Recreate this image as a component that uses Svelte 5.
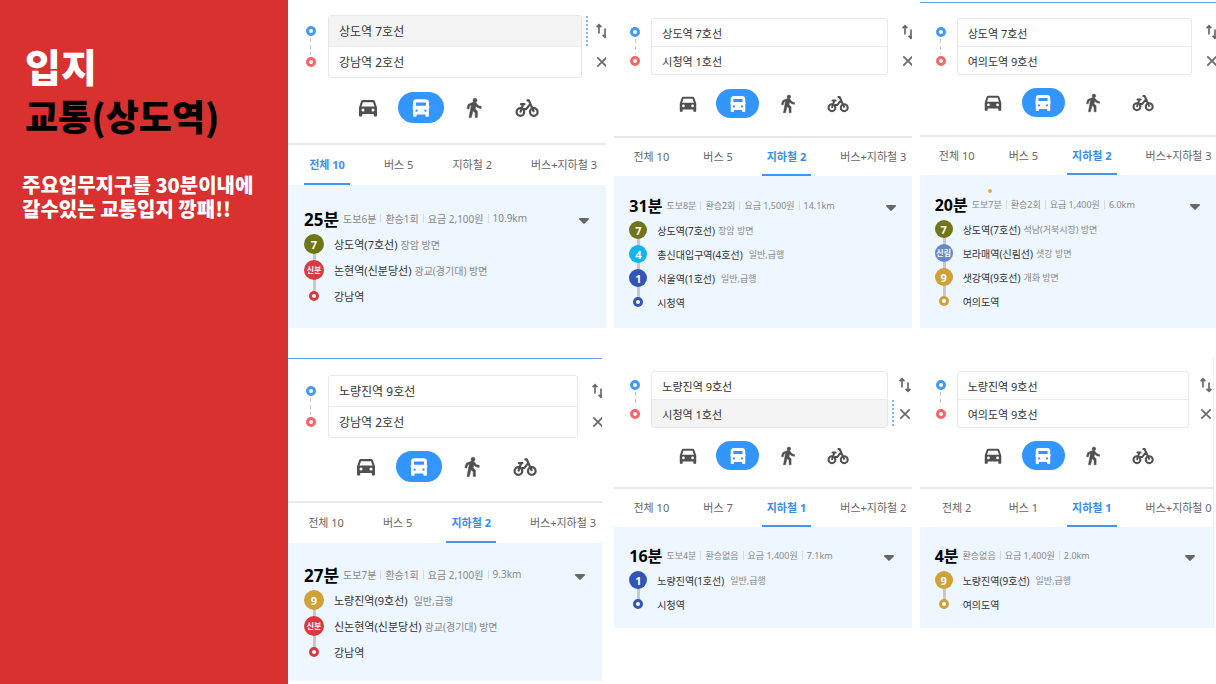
<script>
  const RED = '#d83a3f';
  const OLIVE = '#6f7617';
  const SKY = '#10b4ee';
  const NAVY = '#3355b8';
  const GOLD = '#cfa136';
  const SILLIM = '#6789ca';

  const modes = [
    { id: 'car', label: '자동차' },
    { id: 'bus', label: '대중교통' },
    { id: 'walk', label: '도보' },
    { id: 'bike', label: '자전거' }
  ];

  let routes = $state([
    {
      look: 'large',
      from: '상도역 7호선', to: '강남역 2호선', focused: 'from',
      tabs: ['전체 10', '버스 5', '지하철 2', '버스+지하철 3'], tab: 0, mode: 'bus',
      time: '25분', facts: ['도보6분', '환승1회', '요금 2,100원', '10.9km'],
      stops: [
        { name: '상도역(7호선)', note: '장암 방면', badge: '7', color: OLIVE },
        { name: '논현역(신분당선)', note: '광교(경기대) 방면', badge: '신분', color: RED },
        { name: '강남역', color: RED }
      ]
    },
    {
      look: '',
      from: '상도역 7호선', to: '시청역 1호선', focused: '',
      tabs: ['전체 10', '버스 5', '지하철 2', '버스+지하철 3'], tab: 2, mode: 'bus',
      time: '31분', facts: ['도보8분', '환승2회', '요금 1,500원', '14.1km'],
      stops: [
        { name: '상도역(7호선)', note: '장암 방면', badge: '7', color: OLIVE },
        { name: '총신대입구역(4호선)', note: '일반,급행', badge: '4', color: SKY, wide: true },
        { name: '서울역(1호선)', note: '일반,급행', badge: '1', color: NAVY, wide: true },
        { name: '시청역', color: NAVY }
      ]
    },
    {
      look: 'ruled marked',
      from: '상도역 7호선', to: '여의도역 9호선', focused: '',
      tabs: ['전체 10', '버스 5', '지하철 2', '버스+지하철 3'], tab: 2, mode: 'bus',
      time: '20분', facts: ['도보7분', '환승2회', '요금 1,400원', '6.0km'],
      stops: [
        { name: '상도역(7호선)', note: '석남(거북시장) 방면', badge: '7', color: OLIVE },
        { name: '보라매역(신림선)', note: '샛강 방면', badge: '신림', color: SILLIM },
        { name: '샛강역(9호선)', note: '개화 방면', badge: '9', color: GOLD },
        { name: '여의도역', color: GOLD }
      ]
    },
    {
      look: 'large lower',
      from: '노량진역 9호선', to: '강남역 2호선', focused: '',
      tabs: ['전체 10', '버스 5', '지하철 2', '버스+지하철 3'], tab: 2, mode: 'bus',
      time: '27분', facts: ['도보7분', '환승1회', '요금 2,100원', '9.3km'],
      stops: [
        { name: '노량진역(9호선)', note: '일반,급행', badge: '9', color: GOLD, wide: true },
        { name: '신논현역(신분당선)', note: '광교(경기대) 방면', badge: '신분', color: RED },
        { name: '강남역', color: RED }
      ]
    },
    {
      look: 'lower',
      from: '노량진역 9호선', to: '시청역 1호선', focused: 'to',
      tabs: ['전체 10', '버스 7', '지하철 1', '버스+지하철 2'], tab: 2, mode: 'bus',
      time: '16분', facts: ['도보4분', '환승없음', '요금 1,400원', '7.1km'],
      stops: [
        { name: '노량진역(1호선)', note: '일반,급행', badge: '1', color: NAVY, wide: true },
        { name: '시청역', color: NAVY }
      ]
    },
    {
      look: 'lower edged',
      from: '노량진역 9호선', to: '여의도역 9호선', focused: '',
      tabs: ['전체 2', '버스 1', '지하철 1', '버스+지하철 0'], tab: 2, mode: 'bus',
      time: '4분', facts: ['환승없음', '요금 1,400원', '2.0km'],
      stops: [
        { name: '노량진역(9호선)', note: '일반,급행', badge: '9', color: GOLD, wide: true },
        { name: '여의도역', color: GOLD }
      ]
    }
  ]);

  function swap(route) {
    [route.from, route.to] = [route.to, route.from];
  }

  function clear(route) {
    route.from = '';
    route.to = '';
  }
</script>

{#snippet modeIcon(id)}
  <svg class="mode-icon" viewBox="0 0 24 24" aria-hidden="true">
    {#if id === 'car'}
      <path fill="currentColor" fill-rule="evenodd" d="M18.9 5.2C18.6 4.4 18 4 17.300 4H6.700C6 4 5.400 4.400 5.100 5.200L3 11.500V19.500c0 .6.4 1 1 1h1.200c.6 0 1-.4 1-1V18h11.600v1.500c0 .6.4 1 1 1H20c.6 0 1-.4 1-1v-8zM7 15.600a1.500 1.500 0 1 1 0-3 1.500 1.500 0 0 1 0 3zm10 0a1.500 1.500 0 1 1 0-3 1.500 1.500 0 0 1 0 3zM5.500 10.500 7 6.200h10l1.500 4.300z" />
    {:else if id === 'bus'}
      <path fill="currentColor" fill-rule="evenodd" d="M7.600 3.300h8.800c2.300 0 3.500 1.200 3.500 3.200v3.500h.4v2.400h-.4V19.700c0 .6-.4 1-1 1h-1.500c-.6 0-1-.4-1-1V18.600H7.600v1.100c0 .6-.4 1-1 1H5.100c-.6 0-1-.4-1-1V12.400h-.4V10h.4V6.500c0-2 1.200-3.200 3.500-3.200zM7 6.500v3.300h10V6.500zm.6 9.300a1.200 1.200 0 1 0 0-2.400 1.200 1.200 0 0 0 0 2.400zm8.800 0a1.200 1.200 0 1 0 0-2.400 1.200 1.200 0 0 0 0 2.400z" />
    {:else if id === 'walk'}
      <g fill="currentColor" stroke="currentColor" stroke-width=".5">
        <circle cx="13" cy="4.200" r="2" />
        <path d="M9.300 9.100 7 21.600h2.300l1.700-6.800 2.200 2v4.800h2.200v-6.500l-2.200-2.200.6-3c1.300 1.500 3.300 2.500 5.400 2.500v-2.100c-1.900 0-3.400-1-4.200-2.300l-.9-1.300c-.4-.5-.9-.8-1.600-.8-.3 0-.5 0-.8.1L6.200 8.300 4.800 12.500l1.900.7 1.100-3.500z" />
      </g>
    {:else}
      <g fill="none" stroke="currentColor" stroke-width="2.200" stroke-linecap="round" stroke-linejoin="round">
        <circle cx="5.400" cy="16" r="3.800" />
        <circle cx="18.800" cy="16" r="3.800" />
        <path d="M5.600 15.600 8 8.400M6 8.200h3.400M9.200 13.200h1.800L15 8.400M12.400 4.400h1.400l4.800 10.800" />
      </g>
    {/if}
  </svg>
{/snippet}

<div class="page">
  <aside class="intro">
    <h1>입지<span>교통(상도역)</span></h1>
    <p>주요업무지구를 30분이내에<br />갈수있는 교통입지 깡패!!</p>
  </aside>

  <main class="board">
    {#each routes as route, i}
      <section class="panel {route.look}">
        <form class="search" onsubmit={(event) => event.preventDefault()}>
          <div class="ends" aria-hidden="true">
            <span class="ring"></span>
            <span class="ring goal"></span>
          </div>
          <div class="fields">
            <div class="field" class:focused={route.focused === 'from'}>
              <input id="from-{i}" aria-label="출발지" bind:value={route.from} />
            </div>
            <div class="field" class:focused={route.focused === 'to'}>
              <input id="to-{i}" aria-label="도착지" bind:value={route.to} />
            </div>
          </div>
          <div class="tools">
            <button type="button" aria-label="출발지와 도착지 바꾸기" onclick={() => swap(route)}>
              <svg viewBox="0 0 16 16" aria-hidden="true">
                <path d="M5 10.500V1.800M2.600 4.200 5 1.800l2.400 2.400M11 5.500v8.700M8.600 11.800 11 14.200l2.400-2.400" />
              </svg>
            </button>
            <button type="button" aria-label="지우기" onclick={() => clear(route)}>
              <svg viewBox="0 0 16 16" aria-hidden="true">
                <path d="M3.300 3.300l9.400 9.400M12.700 3.300l-9.400 9.400" />
              </svg>
            </button>
          </div>
        </form>

        <div class="modes">
          {#each modes as mode}
            <button
              type="button"
              class:on={route.mode === mode.id}
              aria-label={mode.label}
              aria-pressed={route.mode === mode.id}
              onclick={() => (route.mode = mode.id)}
            >
              {@render modeIcon(mode.id)}
            </button>
          {/each}
        </div>

        <div class="tabs">
          {#each route.tabs as tab, n}
            <button
              type="button"
              class:active={route.tab === n}
              aria-pressed={route.tab === n}
              onclick={() => (route.tab = n)}>{tab}</button>
          {/each}
        </div>

        <div class="result">
          <div class="summary">
            <strong>{route.time}</strong>
            <ul class="facts">
              {#each route.facts as fact}
                <li>{fact}</li>
              {/each}
            </ul>
            <button type="button" class="caret" aria-label="펼치기">
              <svg viewBox="0 0 10 6" aria-hidden="true">
                <path d="M1 0h8c.8 0 1.200.8.7 1.400L5.700 5.600a1 1 0 0 1-1.400 0L.3 1.400C-.2.800.2 0 1 0z" />
              </svg>
            </button>
          </div>
          <ol class="stops">
            {#each route.stops as stop}
              <li>
                <span class="marker" style:--line={stop.color}>
                  {#if stop.badge}
                    <span class="badge" class:word={stop.badge.length > 1}>{stop.badge}</span>
                  {:else}
                    <span class="end"></span>
                  {/if}
                </span>
                <span class="name">{stop.name}</span>
                {#if stop.note}
                  <span class="note" class:wide={stop.wide}>{stop.note}</span>
                {/if}
              </li>
            {/each}
          </ol>
        </div>
      </section>
    {/each}
  </main>
</div>

<style>
  :global(body) {
    margin: 0;
    background: #fff;
  }

  .page {
    display: grid;
    grid-template-columns: 288px minmax(0, 1fr);
    min-height: 100vh;
    font-family: "Noto Sans", "Noto Sans CJK KR", sans-serif;
    color: #333;
  }

  .page *,
  .page *::before,
  .page *::after {
    box-sizing: border-box;
  }

  button,
  input {
    margin: 0;
    padding: 0;
    border: 0;
    background: none;
    color: inherit;
    font: inherit;
  }

  button {
    cursor: pointer;
  }

  svg {
    display: block;
  }

  ul,
  ol {
    margin: 0;
    padding: 0;
    list-style: none;
  }

  .intro {
    padding: 40px 22px;
    background: #d93030;
    color: #fff;
    font-family: "Noto Sans CJK KR", sans-serif;
    white-space: nowrap;
  }

  .intro h1 {
    margin: 0 0 33px;
    padding-left: 3px;
    font-size: 39px;
    font-weight: 900;
    line-height: 50px;
  }

  .intro h1 span {
    display: block;
    font-size: 36px;
    color: #000;
  }

  .intro p {
    margin: 0;
    font-size: 20px;
    font-weight: 900;
    line-height: 24px;
  }

  .board {
    display: grid;
    grid-template-columns: 318fr 297fr 296fr;
    gap: 30px 8px;
    align-content: start;
  }

  .panel {
    --edge: 37px;
    --field: 27px;
    --pill-w: 43px;
    --pill-h: 29px;
    --mode-left: 52px;
    --mode-top: 14px;
    --mode-bottom: 18px;
    --icon: 22px;
    --tab-left: 14px;
    --tab-h: 38px;
    --tab-gap: 24px;
    --text: 11px;
    --time: 16px;
    --meta: 9px;
    --stop: 10px;
    --row: 24px;
    --badge: 18px;
    --pad: 15px;
    --result-top: 16px;
    --result-bottom: 14px;
    --tools: 12px;
    --caret: 1px;
    position: relative;
    display: flex;
    flex-direction: column;
    min-width: 0;
    padding-top: 18px;
    overflow: hidden;
  }

  .lower {
    --mode-top: 13px;
    --mode-bottom: 17px;
    --result-top: 15px;
    --result-bottom: 12px;
    --tools: 9px;
    --caret: 3px;
    align-self: start;
    padding-top: 13px;
  }

  .large {
    --edge: 40px;
    --field: 30px;
    --pill-w: 46px;
    --pill-h: 31px;
    --mode-left: 57px;
    --mode-top: 14px;
    --mode-bottom: 20px;
    --icon: 24px;
    --tab-left: 16px;
    --tab-h: 40px;
    --tab-gap: 29px;
    --text: 12px;
    --time: 17px;
    --meta: 10px;
    --stop: 11px;
    --row: 26px;
    --badge: 20px;
    --pad: 16px;
    --result-top: 20px;
    --result-bottom: 18px;
    --tools: 12px;
    --caret: 1px;
    padding-top: 15px;
  }

  .large.lower {
    --mode-left: 55px;
    --mode-top: 13px;
    --mode-bottom: 19px;
    --tab-left: 15px;
    --result-top: 18px;
    --result-bottom: 16px;
    margin-right: 4px;
    padding-top: 16px;
    border-top: 1px solid #6a9df0;
  }

  .ruled {
    --mode-top: 13px;
    margin-top: 2px;
    padding-top: 15px;
    border-top: 1px solid #6a9df0;
  }

  .edged {
    margin-right: 2px;
    border-right: 1px solid #eee;
  }

  .marked::after {
    content: "";
    position: absolute;
    top: 186px;
    left: 68px;
    width: 4px;
    height: 4px;
    border-radius: 50%;
    background: #f9a825;
  }

  .search {
    display: grid;
    grid-template-columns: var(--edge) minmax(0, 1fr) 24px;
  }

  .ends {
    position: relative;
    display: flex;
    flex-direction: column;
    justify-content: space-around;
    align-items: center;
    padding-left: 5px;
  }

  .ends::before {
    content: "";
    position: absolute;
    top: 36%;
    bottom: 36%;
    left: calc(50% + 2px);
    width: 1px;
    background: repeating-linear-gradient(#c8c8c8 0 4px, transparent 4px 7px);
  }

  .ring {
    width: 10px;
    height: 10px;
    border: 3px solid #419bf9;
    border-radius: 50%;
  }

  .ring.goal {
    border-color: #f96467;
  }

  .fields {
    border: 1px solid #e8e8e8;
    border-radius: 3px;
  }

  .field {
    position: relative;
    height: var(--field);
  }

  .field + .field {
    height: calc(var(--field) + 1px);
    border-top: 1px solid #ebebeb;
  }

  .field.focused {
    background: #f4f4f4;
  }

  .field.focused::after {
    content: "";
    position: absolute;
    top: 0;
    bottom: 0;
    right: -7px;
    width: 2px;
    background: repeating-linear-gradient(#7db6f8 0 2px, transparent 2px 4px);
  }

  .field input {
    display: block;
    width: 100%;
    height: 100%;
    padding: 0 10px;
    outline: 0;
    font-size: var(--text);
    color: #333;
  }

  .tools {
    display: grid;
    grid-template-rows: 1fr 1fr;
    padding-left: var(--tools);
  }

  .tools button {
    display: flex;
    align-items: center;
    width: 16px;
  }

  .tools svg {
    flex: none;
    width: 16px;
    height: 16px;
    fill: none;
    stroke: #6a6a6a;
    stroke-width: 1.7;
  }

  .modes {
    display: flex;
    gap: 7px;
    margin: var(--mode-top) 0 var(--mode-bottom);
    padding-left: var(--mode-left);
  }

  .modes button {
    display: grid;
    place-items: center;
    width: var(--pill-w);
    height: var(--pill-h);
    border-radius: 16px;
    color: #505050;
  }

  .modes button.on {
    background: #3396ff;
    color: #fff;
  }

  .mode-icon {
    width: var(--icon);
    height: var(--icon);
  }

  .tabs {
    display: flex;
    gap: var(--tab-gap);
    padding-left: var(--tab-left);
    border-top: 2px solid #e9e9e9;
  }

  .tabs button {
    height: var(--tab-h);
    padding: 0 5px;
    border-bottom: 2px solid transparent;
    font-size: 11px;
    color: #666;
    white-space: nowrap;
  }

  .tabs button:first-child {
    min-width: 46px;
  }

  .tabs button.active {
    border-bottom-color: #4593f7;
    font-weight: 700;
    color: #3b8cf5;
  }

  .result {
    flex: 1;
    padding: var(--result-top) var(--pad) var(--result-bottom);
    background: #eef6ff;
  }

  .summary {
    display: flex;
    align-items: center;
    height: 26px;
    white-space: nowrap;
  }

  .summary strong {
    font-size: var(--time);
    font-weight: 700;
    color: #000;
  }

  .facts {
    display: flex;
    margin-left: 4px;
    font-size: var(--meta);
    color: #888;
  }

  .facts li {
    display: flex;
    align-items: center;
  }

  .facts li + li::before {
    content: "";
    width: 1px;
    height: 9px;
    margin: 0 4px;
    background: #d6dbe0;
  }

  .caret {
    margin: 5px var(--caret) 0 auto;
  }

  .caret svg {
    width: 10px;
    height: 6px;
    fill: #666;
  }

  .stops li {
    display: flex;
    align-items: center;
    height: var(--row);
    font-size: var(--stop);
    white-space: nowrap;
  }

  .marker {
    position: relative;
    display: grid;
    place-items: center;
    width: var(--badge);
    height: 100%;
    margin-right: 10px;
  }

  .stops li:not(:last-child) .marker::before {
    content: "";
    position: absolute;
    top: 50%;
    left: calc(50% - 1px);
    width: 3px;
    height: 100%;
    background: #c6c8ca;
  }

  .badge,
  .end {
    position: relative;
    z-index: 1;
    border-radius: 50%;
  }

  .badge {
    display: grid;
    place-items: center;
    width: var(--badge);
    height: var(--badge);
    background: var(--line);
    color: #fff;
    font-size: 11px;
    font-weight: 700;
    line-height: 1;
  }

  .badge.word {
    font-size: 8px;
  }

  .end {
    width: 10px;
    height: 10px;
    border: 3px solid var(--line);
    background: #fff;
  }

  .note {
    margin-left: 3px;
    font-size: var(--meta);
    color: #888;
  }

  .note.wide {
    margin-left: 6px;
  }
</style>
